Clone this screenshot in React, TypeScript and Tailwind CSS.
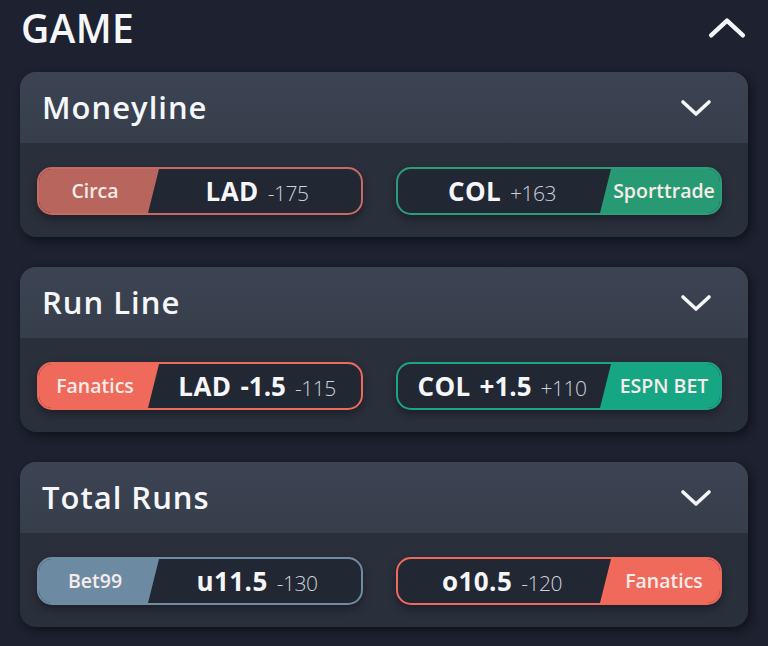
import React from 'react';

type Side = {
  book: string;
  color: string;
  border: string;
  main: string;
  line?: string;
  odds: string;
};

type Market = {
  title: string;
  left: Side;
  right: Side;
};

const markets: Market[] = [
  {
    title: 'Moneyline',
    left: { book: 'Circa', color: 'bg-[#b8655d]', border: 'border-[#c56b61]', main: 'LAD', odds: '-175' },
    right: { book: 'Sporttrade', color: 'bg-[#289a73]', border: 'border-[#2c9d78]', main: 'COL', odds: '+163' },
  },
  {
    title: 'Run Line',
    left: { book: 'Fanatics', color: 'bg-[#f06a5c]', border: 'border-[#f06a5c]', main: 'LAD', line: '-1.5', odds: '-115' },
    right: { book: 'ESPN BET', color: 'bg-[#16a684]', border: 'border-[#1ba585]', main: 'COL', line: '+1.5', odds: '+110' },
  },
  {
    title: 'Total Runs',
    left: { book: 'Bet99', color: 'bg-[#6c8ba3]', border: 'border-[#6f8ca3]', main: 'u11.5', odds: '-130' },
    right: { book: 'Fanatics', color: 'bg-[#f06a5c]', border: 'border-[#f06a5c]', main: 'o10.5', odds: '-120' },
  },
];

function Chevron({ up, className }: { up?: boolean; className?: string }) {
  return (
    <svg viewBox="0 0 32 18" className={className} fill="none">
      <path
        d={up ? 'M3 15 L16 3 L29 15' : 'M3 3 L16 15 L29 3'}
        stroke="#f4f5f7"
        strokeWidth="3.6"
        strokeLinecap="round"
        strokeLinejoin="round"
      />
    </svg>
  );
}

function Label({ side }: { side: Side }) {
  return (
    <span className="flex items-baseline gap-[9px]">
      <span className="text-[26px] font-bold tracking-[0.4px] text-[#f5f6f8]">{side.main}</span>
      {side.line && <span className="text-[26px] font-bold text-[#f5f6f8]">{side.line}</span>}
      <span className="text-[21px] font-light tracking-[-0.5px] text-[#cfd2d9]">{side.odds}</span>
    </span>
  );
}

function Pill({ side, bookRight }: { side: Side; bookRight?: boolean }) {
  const book = (
    <div
      className={`flex h-full w-[120px] shrink-0 items-center justify-center text-[19.5px] font-semibold text-[#f7ece9] ${side.color} ${
        bookRight
          ? '-ml-[6px] pl-[8px] [clip-path:polygon(11px_0,100%_0,100%_100%,0_100%)]'
          : '-mr-[6px] pr-[8px] [clip-path:polygon(0_0,100%_0,calc(100%-11px)_100%,0_100%)]'
      }`}
    >
      {side.book}
    </div>
  );
  return (
    <div
      className={`flex h-12 overflow-hidden rounded-[15px] border-2 bg-[#222734] shadow-[0_4px_8px_rgba(0,0,0,0.35)] ${side.border}`}
    >
      {!bookRight && book}
      <div className="flex flex-1 items-center justify-center">
        <Label side={side} />
      </div>
      {bookRight && book}
    </div>
  );
}

function MarketCard({ market }: { market: Market }) {
  return (
    <div className="overflow-hidden rounded-[16px] bg-[#2a2f3c] shadow-[3px_4px_10px_rgba(0,0,0,0.45)]">
      <div className="flex h-[71px] items-center justify-between bg-gradient-to-b from-[#3c4453] to-[#363d4b] pl-[22px] pr-[36px]">
        <span className="text-[31px] font-semibold tracking-[1px] text-[#f5f6f8]">{market.title}</span>
        <Chevron className="h-[18px] w-[32px]" />
      </div>
      <div className="grid grid-cols-2 gap-[33px] pb-[22px] pl-[17px] pr-[26px] pt-[24px]">
        <Pill side={market.left} />
        <Pill side={market.right} bookRight />
      </div>
    </div>
  );
}

export default function App() {
  return (
    <div className="h-[646px] w-[768px] overflow-hidden bg-[#1d2130] px-[20px] font-['Open_Sans',sans-serif]">
      <div className="flex h-[72px] items-start justify-between pl-[1px] pr-[1px] pt-[3px]">
        <span className="text-[39px] font-semibold leading-[50px] tracking-[0.3px] text-[#f5f6f8]">GAME</span>
        <Chevron up className="mt-[14px] h-[22px] w-[40px]" />
      </div>
      <div className="flex flex-col gap-[30px]">
        {markets.map((m) => (
          <MarketCard key={m.title} market={m} />
        ))}
      </div>
    </div>
  );
}
